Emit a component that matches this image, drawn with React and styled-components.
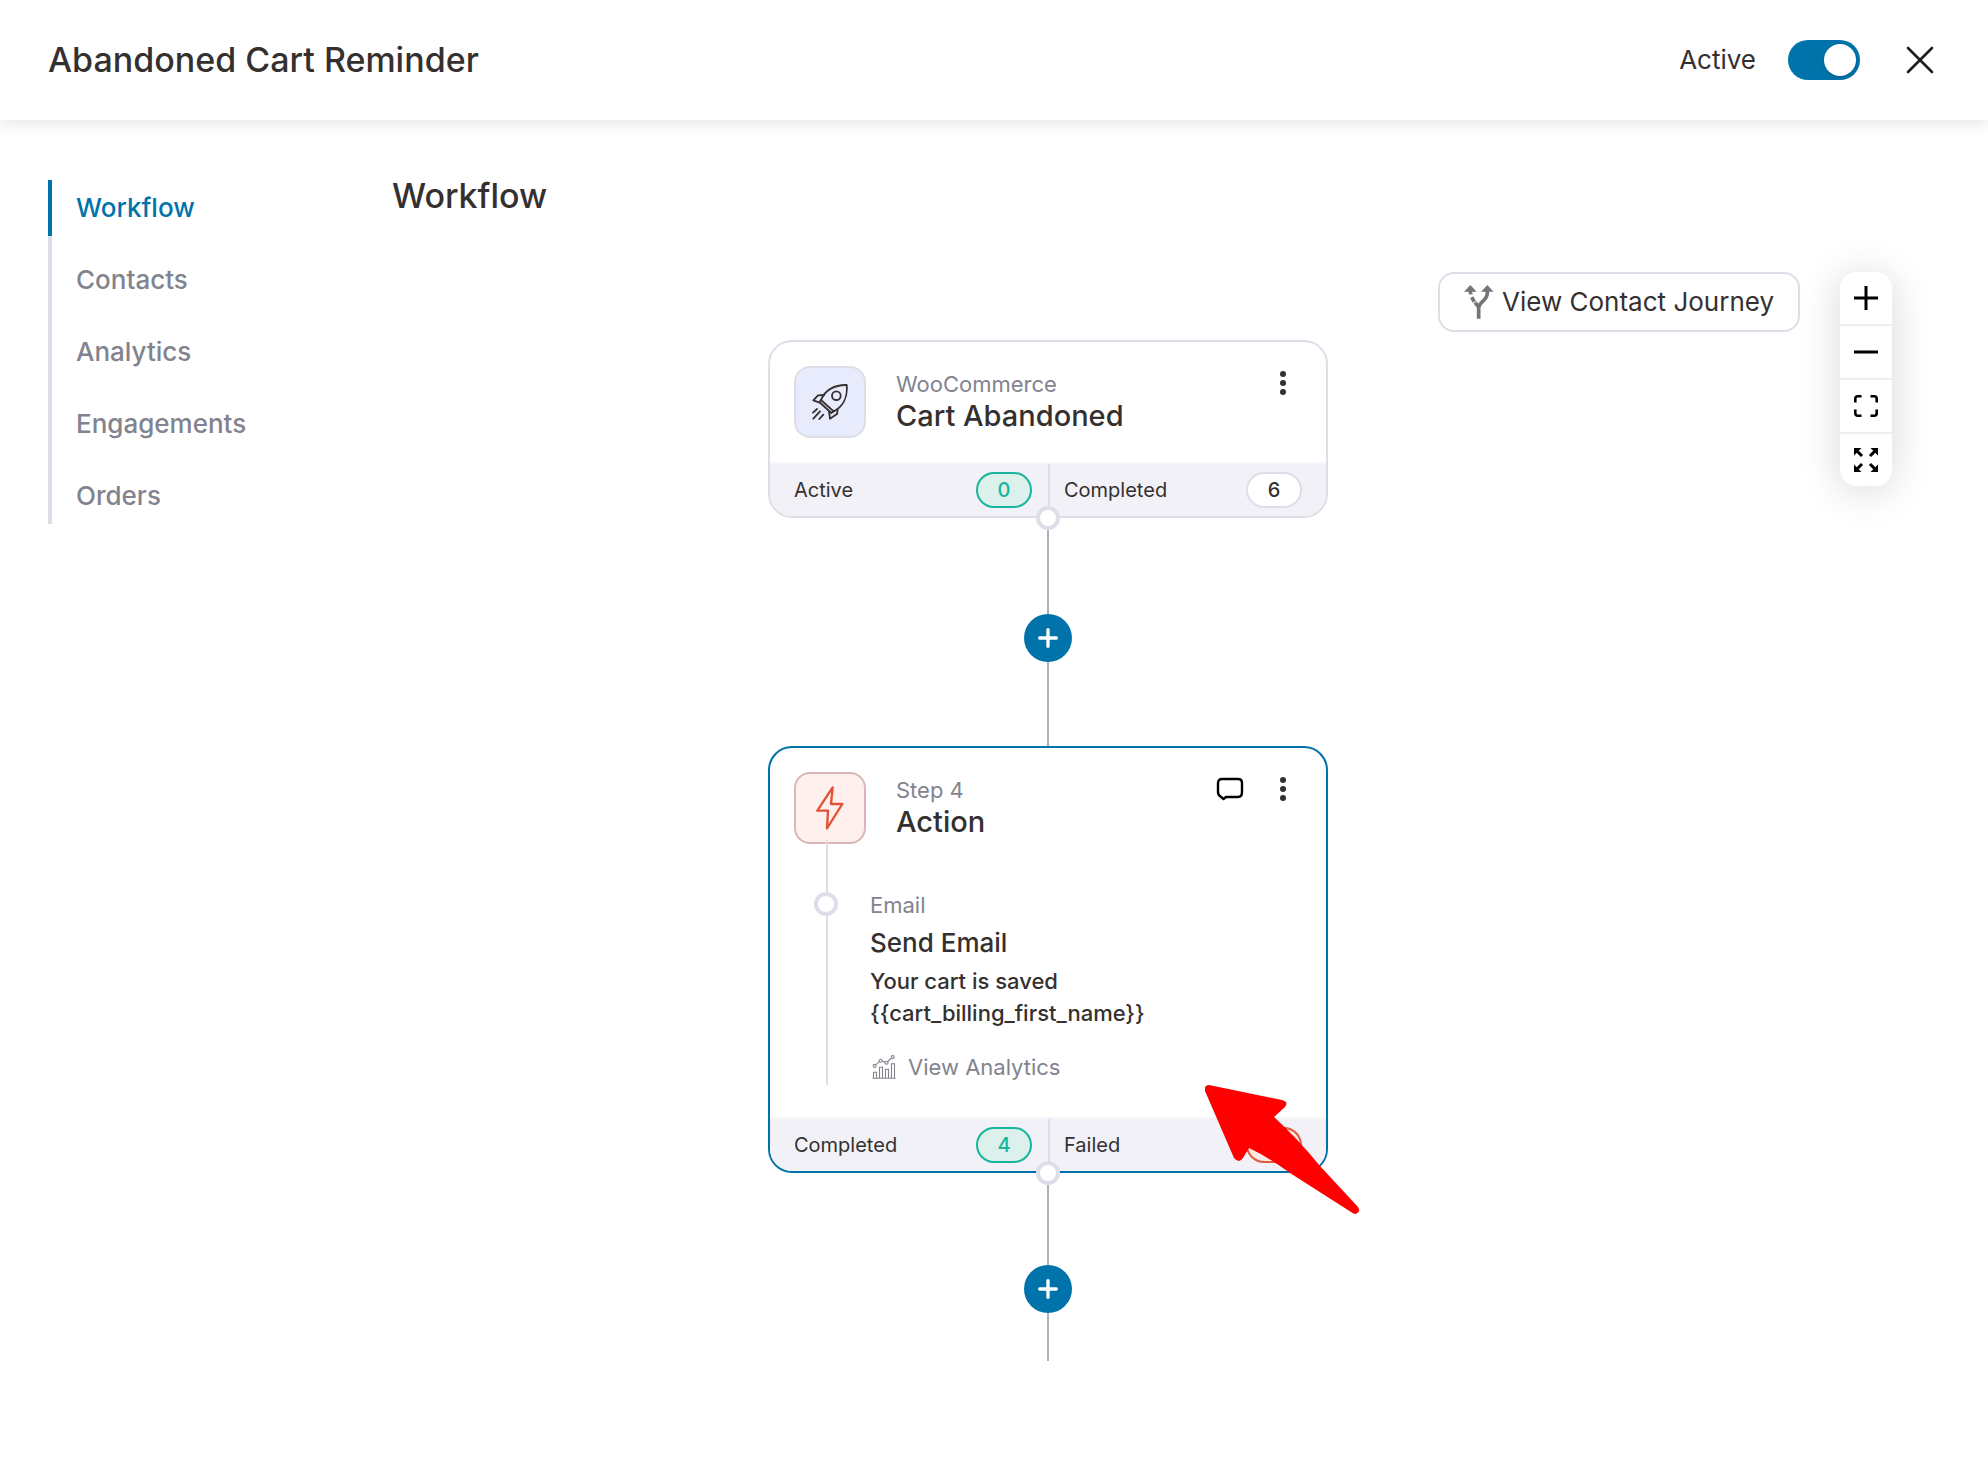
import React, { useState } from 'react';
import styled, { createGlobalStyle } from 'styled-components';

const GlobalStyle = createGlobalStyle`
  * {
    box-sizing: border-box;
  }

  body {
    margin: 0;
    font-family: 'Inter', 'Liberation Sans', sans-serif;
    background-color: #ffffff;
    color: #353030;
  }

  button {
    font-family: inherit;
    color: inherit;
    padding: 0;
    border: none;
    background: none;
    cursor: pointer;
  }
`;

const Header = styled.header`
  display: flex;
  align-items: center;
  justify-content: space-between;
  height: 120px;
  padding: 0 48px;
  background-color: #ffffff;
  box-shadow: 0 4px 16px rgba(0, 0, 0, 0.1);
`;

const Title = styled.h1`
  margin: 0;
  font-size: 34px;
  line-height: 44px;
  font-weight: 500;
`;

const HeaderActions = styled.div`
  display: flex;
  align-items: center;
`;

const StatusLabel = styled.label`
  display: flex;
  align-items: center;
  gap: 32px;
  font-size: 26px;
  line-height: 32px;
  cursor: pointer;
`;

const Switch = styled.input`
  appearance: none;
  width: 72px;
  height: 40px;
  margin: 0;
  padding: 4px;
  border-radius: 20px;
  background-color: ${(props) => (props.checked ? '#0073aa' : '#b0b0b8')};
  cursor: pointer;

  &::before {
    content: '';
    display: block;
    width: 32px;
    height: 32px;
    margin-left: ${(props) => (props.checked ? '32px' : '0')};
    border-radius: 50%;
    background-color: #ffffff;
    box-shadow: 0 2px 4px rgba(0, 0, 0, 0.15);
  }
`;

const CloseButton = styled.button`
  display: flex;
  margin-left: 40px;
  padding: 6px;
`;

const Layout = styled.div`
  display: grid;
  grid-template-columns: 296px minmax(0, 1fr);
  gap: 48px;
  padding: 60px 48px 48px;
`;

const SideNav = styled.nav`
  display: flex;
  flex-direction: column;
  align-self: start;
  gap: 16px;
  background: linear-gradient(#dedeea, #dedeea) left / 4px 100% no-repeat;
`;

const NavLink = styled.a`
  padding: 12px 24px;
  border-left: 4px solid ${(props) => (props.$active ? '#0073aa' : '#dedeea')};
  font-size: 26px;
  line-height: 32px;
  font-weight: 500;
  text-decoration: none;
  color: ${(props) => (props.$active ? '#0073aa' : '#82838e')};
`;

const PageTitle = styled.h2`
  margin: 0;
  font-size: 34px;
  line-height: 32px;
  font-weight: 500;
`;

/* the flow and the floating tools share one grid cell */
const Canvas = styled.section`
  display: grid;
  margin-top: 60px;
  padding-right: 48px;
`;

const Tools = styled.div`
  grid-area: 1 / 1;
  justify-self: end;
  align-self: start;
  display: flex;
  align-items: flex-start;
  gap: 40px;
`;

const JourneyButton = styled.button`
  display: flex;
  align-items: center;
  gap: 8px;
  height: 60px;
  padding: 0 24px;
  border: 2px solid #dedeea;
  border-radius: 16px;
  background-color: #ffffff;
  font-size: 26px;
  line-height: 32px;
`;

const ZoomControls = styled.div`
  display: flex;
  flex-direction: column;
  gap: 2px;
  overflow: hidden;
  border-radius: 16px;
  background-color: #eeeeee;
  box-shadow: 0 4px 40px rgba(0, 0, 0, 0.16);
`;

const ZoomButton = styled.button`
  display: flex;
  align-items: center;
  justify-content: center;
  width: 52px;
  height: 52px;
  background-color: #ffffff;
`;

const Flow = styled.div`
  grid-area: 1 / 1;
  display: flex;
  flex-direction: column;
  align-items: center;
  padding: 68px 188px 0 0;
`;

const Card = styled.article`
  position: relative;
  width: 560px;
  border: 2px solid ${(props) => (props.$selected ? '#0073aa' : '#dedeea')};
  border-radius: 24px;
  background-color: #ffffff;
`;

const CardHeader = styled.div`
  display: flex;
  align-items: center;
  padding: 24px;
`;

const IconBox = styled.div`
  display: flex;
  align-items: center;
  justify-content: center;
  width: 72px;
  height: 72px;
  margin-right: 30px;
  border: 2px solid ${(props) => (props.$tone === 'action' ? '#dbb5b7' : '#dedeea')};
  border-radius: 16px;
  background-color: ${(props) => (props.$tone === 'action' ? '#ffefee' : '#e8ebfb')};
`;

const CardHeading = styled.div`
  flex: 1;
`;

const Caption = styled.div`
  font-size: 22px;
  line-height: 28px;
  color: #82838e;
`;

const CardTitle = styled.h3`
  margin: 0;
  font-size: 29px;
  line-height: 36px;
  font-weight: 500;
`;

const CardActions = styled.div`
  display: flex;
  align-items: center;
  align-self: flex-start;
  gap: 36px;
  padding-right: 16px;
`;

const IconButton = styled.button`
  display: flex;
  align-items: center;
  justify-content: center;
  height: 34px;
`;

const CardBody = styled.div`
  display: flex;
  gap: 32px;
  padding: 0 44px 32px;
`;

const Rail = styled.div`
  position: relative;
  width: 24px;
  margin-top: -28px;
  padding-top: 52px;

  &::before {
    content: '';
    position: absolute;
    top: 0;
    bottom: 0;
    left: 12px;
    width: 2px;
    background-color: #dedeea;
  }
`;

const Handle = styled.div`
  position: relative;
  width: 24px;
  height: 24px;
  border: 4px solid #dedeea;
  border-radius: 50%;
  background-color: #ffffff;
`;

const StepDetails = styled.div`
  padding: 23px 0 4px;
`;

const StepTitle = styled.h4`
  margin: 6px 0 4px;
  font-size: 26px;
  line-height: 36px;
  font-weight: 500;
`;

const StepText = styled.p`
  margin: 0;
  font-size: 22px;
  line-height: 32px;
  font-weight: 500;
`;

const AnalyticsLink = styled.a`
  display: flex;
  align-items: center;
  gap: 12px;
  margin-top: 24px;
  padding-left: 2px;
  font-size: 22px;
  line-height: 28px;
  color: #82838e;
  text-decoration: none;
`;

const CardFooter = styled.div`
  display: grid;
  grid-template-columns: 1fr 1fr;
  height: 54px;
  border-top: 2px solid #f5f5fa;
  border-radius: 0 0 22px 22px;
  background-color: #f1f1f7;
`;

const Stat = styled.div`
  display: flex;
  align-items: center;
  justify-content: space-between;
  padding: 0 16px 0 24px;
  font-size: 20px;
  line-height: 24px;

  & + & {
    padding: 0 24px 0 14px;
    border-left: 2px solid #dedeea;
  }
`;

const pillTones = {
  success: { border: '#17b59b', background: '#dcf0ec', text: '#17b59b' },
  neutral: { border: '#dedeea', background: '#ffffff', text: '#353030' },
  danger: { border: '#e35a3a', background: '#fde8e6', text: '#e35a3a' },
};

const Pill = styled.span`
  display: flex;
  align-items: center;
  justify-content: center;
  width: 56px;
  height: 36px;
  border: 2px solid ${(props) => pillTones[props.$tone].border};
  border-radius: 18px;
  background-color: ${(props) => pillTones[props.$tone].background};
  color: ${(props) => pillTones[props.$tone].text};
  font-weight: 500;
`;

const Connector = styled.div`
  display: flex;
  flex-direction: column;
  align-items: center;
  margin-top: -12px;
`;

const Line = styled.div`
  width: 2px;
  height: ${(props) => props.$length}px;
  background-color: #b0b0b8;
`;

const AddButton = styled.button`
  display: flex;
  align-items: center;
  justify-content: center;
  width: 48px;
  height: 48px;
  border-radius: 50%;
  background-color: #0073aa;
`;

const Pointer = styled.svg`
  position: absolute;
  right: -35px;
  bottom: -44px;
  z-index: 1;
`;

const CloseIcon = () => (
  <svg width="28" height="28" viewBox="0 0 28 28" stroke="#1e1e1e" strokeWidth="2.6" strokeLinecap="round">
    <path d="M2 2l24 24M26 2L2 26" />
  </svg>
);

const JourneyIcon = () => (
  <svg width="30" height="34" viewBox="0 0 90 102" fill="none" stroke="#757575" strokeWidth="11">
    <path d="M19 0L0 20H38ZM70 0L51 20H89Z" fill="#757575" stroke="none" />
    <path d="M70 18V24C70 48 44 50 44 70V101" />
    <path d="M19 18L20 28M23 37L31 50M33 52L44 66" />
  </svg>
);

const PlusIcon = ({ color = '#000000', size = 24, width = 3, cap = 'butt' }) => (
  <svg width={size} height={size} viewBox="0 0 24 24" stroke={color} strokeWidth={width} strokeLinecap={cap}>
    <path d={cap === 'round' ? 'M12 2V22M2 12H22' : 'M12 0V24M0 12H24'} />
  </svg>
);

const MinusIcon = () => (
  <svg width="24" height="4" viewBox="0 0 24 4">
    <path d="M0 0.5H24V3.5H0Z" />
  </svg>
);

const FitIcon = () => (
  <svg width="24" height="22" viewBox="0 0 24 22" fill="none" stroke="#000000" strokeWidth="2.6">
    <path d="M1.3 7.5V3.8Q1.3 1.3 3.8 1.3H7.5M16.5 1.3H20.2Q22.7 1.3 22.7 3.8V7.5M22.7 14.5V18.2Q22.7 20.7 20.2 20.7H16.5M7.5 20.7H3.8Q1.3 20.7 1.3 18.2V14.5" />
  </svg>
);

const ExpandIcon = () => (
  <svg width="24" height="24" viewBox="0 0 24 24">
    <path d="M0 0H7.5L0 7.5ZM24 0V7.5L16.5 0ZM24 24H16.5L24 16.5ZM0 24V16.5L7.5 24Z" />
    <path d="M2 2L8 8M22 2L16 8M22 22L16 16M2 22L8 16" stroke="#000000" strokeWidth="3" />
  </svg>
);

const RocketIcon = () => (
  <svg
    width="36"
    height="36"
    viewBox="0 0 108 108"
    fill="none"
    stroke="#353030"
    strokeWidth="5.5"
    strokeLinecap="round"
    strokeLinejoin="round"
  >
    <path d="M27 48C39 18 68 2 104 3C108 40 92 68 65 82" />
    <path d="M27 48L65 82L58 87L22 54Z" />
    <circle cx="73" cy="35" r="13" />
    <path d="M36 33L18 34L4 49L23 56M77 76L75 90L54 104L51 82" />
    <path d="M15 75L3 86M24 82L4 104M34 92L22 105" />
  </svg>
);

const BoltIcon = () => (
  <svg width="28" height="44" viewBox="0 0 84 132" fill="none" stroke="#e35333" strokeWidth="7" strokeLinejoin="round">
    <path d="M50 4L4 74H36L33 127L79 54H45Z" />
  </svg>
);

const DotsIcon = () => (
  <svg width="6" height="24" viewBox="0 0 6 24" fill="#353030">
    <circle cx="3" cy="3" r="3" />
    <circle cx="3" cy="12" r="3" />
    <circle cx="3" cy="21" r="3" />
  </svg>
);

const CommentIcon = () => (
  <svg width="28" height="24" viewBox="0 0 28 24" fill="none" stroke="#000000" strokeWidth="2.4" strokeLinejoin="round">
    <path d="M6 2H22Q26 2 26 6V15Q26 20 22 20H10L7.5 22L4.5 19.5Q2 18 2 15V6Q2 2 6 2Z" />
  </svg>
);

const ChartIcon = () => (
  <svg width="24" height="24" viewBox="0 0 24 24" fill="none" stroke="#82838e" strokeWidth="1.1">
    <path d="M0.5 23.2H23.5M1.5 23V17.2H4.5V23M7.5 23V12.2H10.5V23M13.5 23V14.2H16.5V23M19.5 23V8.7H22.5V23" />
    <path d="M4 9.6L7.3 6.7M10.3 6L13 7.3M15.8 6.5L19.3 3.2" />
    <circle cx="2.6" cy="10.9" r="1.5" />
    <circle cx="8.7" cy="5.8" r="1.5" />
    <circle cx="14.5" cy="7.8" r="1.5" />
    <circle cx="20.7" cy="2.1" r="1.5" />
  </svg>
);

const navItems = ['Workflow', 'Contacts', 'Analytics', 'Engagements', 'Orders'];

const zoomTools = [
  { label: 'Zoom in', icon: <PlusIcon /> },
  { label: 'Zoom out', icon: <MinusIcon /> },
  { label: 'Fit view', icon: <FitIcon /> },
  { label: 'Full screen', icon: <ExpandIcon /> },
];

const StatsFooter = ({ stats }) => (
  <CardFooter>
    {stats.map((stat) => (
      <Stat key={stat.label}>
        <span>{stat.label}</span>
        <Pill $tone={stat.tone}>{stat.value}</Pill>
      </Stat>
    ))}
  </CardFooter>
);

const StepConnector = ({ last }) => (
  <Connector>
    <Handle />
    <Line $length={last ? 80 : 84} />
    <AddButton type="button" aria-label="Add step">
      <PlusIcon color="#ffffff" size={20} width={4} cap="round" />
    </AddButton>
    <Line $length={last ? 48 : 84} />
  </Connector>
);

const App = () => {
  const [active, setActive] = useState(true);
  const [section, setSection] = useState('Workflow');

  return (
    <>
      <GlobalStyle />
      <Header>
        <Title>Abandoned Cart Reminder</Title>
        <HeaderActions>
          <StatusLabel htmlFor="status">
            Active
            <Switch
              id="status"
              type="checkbox"
              checked={active}
              onChange={(e) => setActive(e.target.checked)}
            />
          </StatusLabel>
          <CloseButton type="button" aria-label="Close">
            <CloseIcon />
          </CloseButton>
        </HeaderActions>
      </Header>
      <Layout>
        <SideNav>
          {navItems.map((item) => (
            <NavLink
              key={item}
              href={`#${item.toLowerCase()}`}
              $active={item === section}
              onClick={() => setSection(item)}
            >
              {item}
            </NavLink>
          ))}
        </SideNav>
        <main>
          <PageTitle>Workflow</PageTitle>
          <Canvas>
            <Flow>
              <Card>
                <CardHeader>
                  <IconBox>
                    <RocketIcon />
                  </IconBox>
                  <CardHeading>
                    <Caption>WooCommerce</Caption>
                    <CardTitle>Cart Abandoned</CardTitle>
                  </CardHeading>
                  <CardActions>
                    <IconButton type="button" aria-label="More options">
                      <DotsIcon />
                    </IconButton>
                  </CardActions>
                </CardHeader>
                <StatsFooter
                  stats={[
                    { label: 'Active', value: 0, tone: 'success' },
                    { label: 'Completed', value: 6, tone: 'neutral' },
                  ]}
                />
              </Card>
              <StepConnector />
              <Card $selected>
                <CardHeader>
                  <IconBox $tone="action">
                    <BoltIcon />
                  </IconBox>
                  <CardHeading>
                    <Caption>Step 4</Caption>
                    <CardTitle>Action</CardTitle>
                  </CardHeading>
                  <CardActions>
                    <IconButton type="button" aria-label="Add note">
                      <CommentIcon />
                    </IconButton>
                    <IconButton type="button" aria-label="More options">
                      <DotsIcon />
                    </IconButton>
                  </CardActions>
                </CardHeader>
                <CardBody>
                  <Rail>
                    <Handle />
                  </Rail>
                  <StepDetails>
                    <Caption>Email</Caption>
                    <StepTitle>Send Email</StepTitle>
                    <StepText>
                      Your cart is saved
                      <br />
                      {'{{cart_billing_first_name}}'}
                    </StepText>
                    <AnalyticsLink href="#analytics">
                      <ChartIcon />
                      View Analytics
                    </AnalyticsLink>
                  </StepDetails>
                </CardBody>
                <StatsFooter
                  stats={[
                    { label: 'Completed', value: 4, tone: 'success' },
                    { label: 'Failed', value: 0, tone: 'danger' },
                  ]}
                />
                <Pointer width="156" height="130" viewBox="0 0 156 130" fill="#ff0000" aria-hidden="true">
                  <path d="M4 0L77 15Q84 17 80 22L69 32Q93 54 115 81L153 122Q156 127 151 129Q148 129 146 127L85 88Q65 73 44 63L38 73Q34 79 29 73L0 6Q-1 0 4 0Z" />
                </Pointer>
              </Card>
              <StepConnector last />
            </Flow>
            <Tools>
              <JourneyButton type="button">
                <JourneyIcon />
                View Contact Journey
              </JourneyButton>
              <ZoomControls>
                {zoomTools.map((tool) => (
                  <ZoomButton key={tool.label} type="button" aria-label={tool.label}>
                    {tool.icon}
                  </ZoomButton>
                ))}
              </ZoomControls>
            </Tools>
          </Canvas>
        </main>
      </Layout>
    </>
  );
};

export default App;
